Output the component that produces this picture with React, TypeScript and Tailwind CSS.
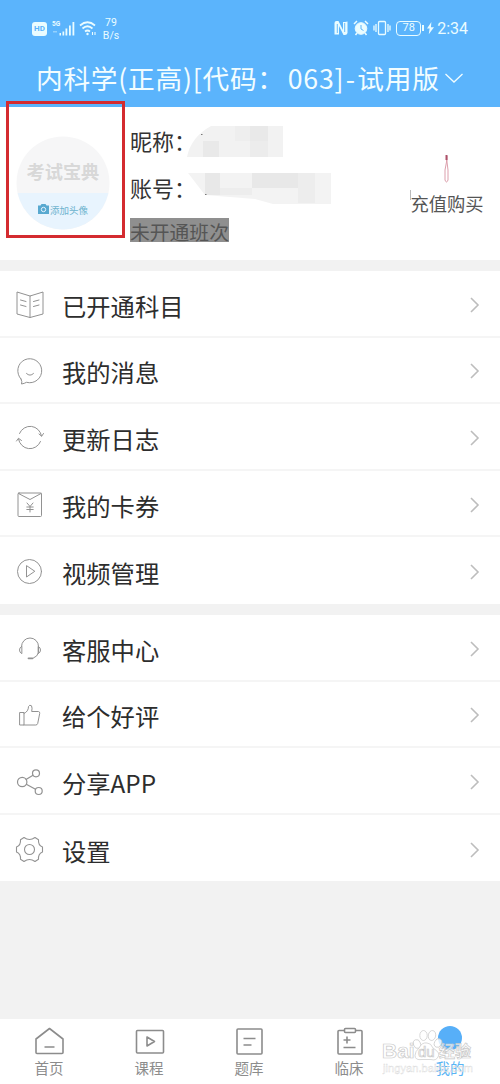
import React from 'react';

const svgProps = {
  viewBox: '0 0 30 30',
  className: 'w-[30px] h-[30px] mt-[3px] -ml-[0.5px] mr-[0.5px] shrink-0',
  fill: 'none',
  stroke: '#929292',
  strokeWidth: 1,
  strokeLinecap: 'round' as const,
  strokeLinejoin: 'round' as const,
};

const BookIcon = () => (
  <svg {...svgProps}>
    <path d="M15 6 2 2v22l13 3.5L28 24V2L15 6v21.5" />
    <path d="m5.5 10 5.5 1.5M5.5 15l5.500 1.500M18.500 11.500 24 10M18.500 16.500 24 15" />
  </svg>
);

const MessageIcon = () => (
  <svg {...svgProps}>
    <path d="M6 23A12 12 0 1 1 11.500 26.300Q9.500 27.500 6.500 28 7.500 26 6 23z" />
    <path d="M11.500 17.500q3.500 3.500 7 0" />
  </svg>
);

const RefreshIcon = () => (
  <svg {...svgProps}>
    <path d="M4.5 10.500A11.500 11.500 0 0 1 26.500 13M25.500 18.500A11.500 11.500 0 0 1 3.500 16" />
    <path d="m24 11 2.700 2.200L28.500 10.500M1.500 18l2-2.700L6.500 17.500" />
  </svg>
);

const CouponIcon = () => (
  <svg {...svgProps}>
    <rect x="3" y="3" width="23.5" height="23.5" rx="1" />
    <path d="m3.500 3.500 11.500 6 11-6M12 13l3 3.500 3-3.500M15 16.500v5.500M11.800 17h6.400M11.800 19.500h6.400" />
  </svg>
);

const VideoIcon = () => (
  <svg {...svgProps}>
    <circle cx="14.5" cy="14.500" r="12" />
    <path d="M11.500 9v11l8-5.500z" />
  </svg>
);

const ServiceIcon = () => (
  <svg {...svgProps}>
    <path d="M6.500 12.500a8.500 8.500 0 0 1 17 0v6q-1 4-5 5.500" />
    <path d="M6.500 12.500q-2 1-2 3.500t2 3.500zM23.500 12.500q2 1 2 3.500t-2 3.500z" />
    <path d="M13.500 24.300h4" strokeWidth={1.800} />
  </svg>
);

const LikeIcon = () => (
  <svg {...svgProps}>
    <path d="M5 12.500h4v12.500H5zM9 13.500q4.500-2 4.500-7 1.200-2.200 3-.7 1 2 .2 5.700h6.800q1.500.2 1.200 2l-2 10q-.4 1.500-2 1.500H9" />
  </svg>
);

const ShareIcon = () => (
  <svg {...svgProps} strokeWidth={1.200}>
    <circle cx="7.200" cy="15" r="4.700" />
    <circle cx="21" cy="6.300" r="3.500" />
    <circle cx="23.700" cy="24" r="3.500" />
    <path d="m11 12.500 7-4.300M11.300 17.200l9.200 5" />
  </svg>
);

const GearIcon = () => (
  <svg {...svgProps} strokeWidth={1.100}>
    <circle cx="14.500" cy="14.500" r="5" />
    <path d="M9 2.500Q14.500 6.500 20 2.500l3.500 2.200q-.5 5.300 4 7.300v5q-4.500 2-4 7.300L20 26.500q-5.500-4-11 0l-3.500-2.200q.5-5.300-4-7.300v-5q4.500-2 4-7.300z" />
  </svg>
);

const firstGroup = [
  { label: '已开通科目', Icon: BookIcon },
  { label: '我的消息', Icon: MessageIcon },
  { label: '更新日志', Icon: RefreshIcon },
  { label: '我的卡券', Icon: CouponIcon },
  { label: '视频管理', Icon: VideoIcon },
];

const secondGroup = [
  { label: '客服中心', Icon: ServiceIcon },
  { label: '给个好评', Icon: LikeIcon },
  { label: '分享APP', Icon: ShareIcon },
  { label: '设置', Icon: GearIcon },
];

interface MenuGroupProps {
  items: { label: string; Icon: React.FC }[];
}

const MenuGroup: React.FC<MenuGroupProps> = ({ items }) => (
  <div className="bg-white">
    {items.map(({ label, Icon }, i) => (
      <div
        key={label}
        className={`flex items-center h-[66.6px] pl-[15px] pr-[19px] ${i < items.length - 1 ? 'border-b-2 border-[#f5f5f5]' : ''}`}
      >
        <Icon />
        <span className="ml-[17px] mt-[5px] flex-1 text-[24.3px] leading-[36px] text-[#2d2d2d]">{label}</span>
        <svg viewBox="0 0 12 18" className="w-3 h-[18px] mt-[3px]" fill="none" stroke="#bdbdbd" strokeWidth="1.6">
          <path d="m2 2 7 7-7 7" />
        </svg>
      </div>
    ))}
  </div>
);

const StatusBar = () => (
  <div className="flex items-center justify-between h-14 pl-[32px] pr-[32px] text-[#eafcff]">
    <div className="flex items-center">
      <div className="flex items-center justify-center w-[15px] h-[14px] mt-[2px] rounded-[3px] bg-[#eafcff] text-[8px] font-bold text-[#5bb4fb] font-['Roboto']">HD</div>
      <svg viewBox="0 0 24 16" className="w-6 h-4 ml-[5px]" fill="currentColor">
        <text x="0" y="6" fontSize="6.5" fontWeight="700" fontFamily="Roboto, sans-serif">5G</text>
        <path d="M7.500 13H9v2.500H7.500zM10.500 11.500h1.700v4h-1.700zM13.500 8.500h1.800v7h-1.800zM17 5.500h1.800v10H17zM20.500 2h1.800v13.500h-1.800z" />
        <path d="M1 11h4v1.500H1z" opacity=".4" />
      </svg>
      <svg viewBox="0 0 18 16" className="w-[18px] h-4 ml-[3px]" fill="none" stroke="currentColor" strokeWidth="1.7">
        <path d="M1 5.500q7.500-6.500 15 0M3.500 8.500q5-4.500 10 0M6 11.500q2.500-2 5 0" />
        <circle cx="8.5" cy="14" r="1.200" fill="currentColor" stroke="none" />
        <path d="M13.500 12v3M16 12v3" strokeWidth="1.1" />
      </svg>
      <div className="ml-[5px] mt-[1px] w-[18px] text-center text-[10.5px] leading-[13px] font-['Roboto']">
        <div>79</div>
        <div>B/s</div>
      </div>
    </div>
    <div className="flex items-center">
      <svg viewBox="0 0 14 14" className="w-[14px] h-[14px]">
        <path d="M2.500 0h2L9 9V1q2 0 4.500-.5V12q-.5 2-2.500 2H9.500L5 5v8.500H.5V2Q.5 0 2.500 0z" fill="currentColor" />
        <path d="M3.300 3v9M10.700 2v9" stroke="#5bb4fb" strokeWidth=".9" />
      </svg>
      <svg viewBox="0 0 16 16" className="w-4 h-4 ml-[5px]" stroke="currentColor">
        <circle cx="8" cy="8.5" r="5.8" fill="currentColor" />
        <path d="m1 4 3-3M15 4l-3-3M4 13l-1.500 2M12 13l1.500 2" strokeWidth="1.5" />
        <path d="M8 5v4l2.500 1.500" stroke="#5bb4fb" fill="none" />
      </svg>
      <svg viewBox="0 0 18 16" className="w-[18px] h-4 ml-[4px]" fill="none" stroke="currentColor" strokeWidth="1.3">
        <rect x="5.5" y="1.500" width="7" height="13" rx="1" />
        <path d="M3 4v8M1 5.500v5M15 4v8M17 5.500v5" />
      </svg>
      <div className="flex items-center justify-center w-[25px] h-[15px] ml-[5px] rounded-[4px] border border-current text-[11px] font-['Roboto']">78</div>
      <div className="w-[2px] h-[6px] ml-px bg-current" />
      <svg viewBox="0 0 8 14" className="w-[7px] h-[14px] ml-[3px]" fill="currentColor">
        <path d="M5 0 0 7.500h3L2 14l6-8H4.500z" />
      </svg>
      <span className="ml-[3px] mt-px text-[16px] leading-[20px] font-['Roboto']">2:34</span>
    </div>
  </div>
);

const Avatar = () => (
  <svg viewBox="0 0 94 94" className="w-[94px] h-[94px] shrink-0">
    <circle cx="47" cy="47" r="46.5" fill="#f6f6f7" />
    <path d="M1.600 57h90.800a46.500 46.500 0 0 1-90.800 0z" fill="#e8f4fe" />
    <text x="10.5" y="43" fontSize="18.2" fontWeight="700" fill="#d8d8d8">考试宝典</text>
    <path d="M22 69.500h2.500l1-1.500h4l1 1.500H33v8.500H22z" fill="#58a9d0" />
    <circle cx="27.5" cy="73.500" r="2.2" fill="none" stroke="#e6f3fe" />
    <text x="34" y="77.5" fontSize="9.5" fill="#6db3ce">添加头像</text>
  </svg>
);

const Profile = () => (
  <div className="relative flex h-[153px] bg-white">
    <div className="pl-4 pt-[29px]">
      <Avatar />
    </div>
    <div className="ml-[20px] pt-[16px] flex-1 text-[22px] leading-[34px] text-[#333]">
      <div className="flex">
        <span className="w-[57px] shrink-0 whitespace-nowrap">昵称：</span>
        <svg viewBox="0 0 100 34" className="w-[100px] h-[34px]">
          <path d="M0 34Q4 14 24 3h72v31z" fill="#f2f2f2" />
          <path d="M16 18h16v16H16zM63 3h18v15H63z" fill="#e9e9e9" />
          <path d="M48 3h15v15H48z" fill="#eeeeee" />
          <path d="M63 18h18v16H63z" fill="#ececec" />
          <path d="M14 11h1.500v1H14z" fill="#777" />
        </svg>
      </div>
      <div className="flex mt-[13px]">
        <span className="w-[57px] shrink-0 whitespace-nowrap">账号：</span>
        <svg viewBox="0 0 145 34" className="w-[145px] h-[34px]">
          <path d="M1 3h143v31H86L68 29 18 25z" fill="#f3f3f3" />
          <path d="M18 3h15v22H18zM65 3h46v15H65z" fill="#e8e8e8" />
          <path d="M33 18h32v7H33zM111 3h17v30h-17z" fill="#ededed" />
          <path d="M18 24h1.500v1H18z" fill="#777" />
        </svg>
      </div>
      <span className="block mt-[14px] w-[99px] h-[24px] bg-[#8f8f8f] text-[19.8px] leading-[28px] text-[#555] whitespace-nowrap">未开通班次</span>
    </div>
    <div className="flex flex-col items-center pt-[46px] pr-4">
      <svg viewBox="0 0 74 34" className="w-[74px] h-[34px] overflow-visible" fill="none">
        <path d="M36.500 3v6l-1.500 8v10q1.500 4 3 0V17L37 9V3z" stroke="#dc9fac" />
        <path d="M36.500 2v5" stroke="#ad526a" strokeWidth="2" />
        <path d="M.5 37V47" stroke="#bbb" />
      </svg>
      <span className="mt-[2px] text-[18.3px] leading-[28px] text-[#555]">充值购买</span>
    </div>
    {/* highlight frame round the avatar */}
    <div className="absolute left-[6px] top-[-6px] w-[119px] h-[137px] border-[3px] border-[#d42b30]" />
  </div>
);

const tabs = [
  { label: '首页', art: <path d="M2 12 15.500 1.500 29 12v13.500q0 1-1 1H3q-1 0-1-1zM10.500 20h10" /> },
  { label: '课程', art: <path d="M3.500 3.500h25q1 0 1 1V25q0 1-1 1h-25q-1 0-1-1V4.500q0-1 1-1zM13 10v9l7.500-4.500z" /> },
  { label: '题库', art: <path d="M4 2h23q1 0 1 1v23q0 1-1 1H4q-1 0-1-1V3q0-1 1-1zM9.500 11.500h12M9.500 18h8" /> },
  { label: '临床', art: <path d="M10.500 3.500H5q-1 0-1 1V26q0 1 1 1h22q1 0 1-1V4.500q0-1-1-1h-5.500M11.500 1.500h9q1 0 1 1v2q0 1-1 1h-9q-1 0-1-1v-2q0-1 1-1zM9.500 13h7M13 9.500v7M9.500 20.500h12" /> },
];

const TabBar = () => (
  <div className="relative flex h-[65px] bg-white text-[14.5px] leading-[20px] text-[#8c8c8c]">
    {tabs.map(({ label, art }) => (
      <div key={label} className="w-[100px] flex flex-col items-center pt-[8px] pr-[2px]">
        <svg viewBox="0 0 31 29" className="w-[31px] h-[29px]" fill="none" stroke="#8c8c8c" strokeWidth="1.6" strokeLinejoin="round">
          {art}
        </svg>
        <span className="mt-[2px]">{label}</span>
      </div>
    ))}
    <div className="w-[100px] flex flex-col items-center pt-[7px] text-[#59b4f5]">
      <div className="w-6 h-6 rounded-full bg-[#57aff8]" />
      <span className="mt-[8px]">我的</span>
    </div>
    <svg viewBox="0 0 96 54" className="absolute left-[381px] top-[7px] w-[96px] h-[54px]" fill="#ffffff" stroke="#c9c9c9" strokeWidth=".7">
      <g fillOpacity=".8">
        <ellipse cx="36" cy="18" rx="3.5" ry="4.5" transform="rotate(-20 36 18)" />
        <ellipse cx="42.5" cy="9.5" rx="3.700" ry="5" />
        <ellipse cx="51" cy="9.5" rx="3.700" ry="5" transform="rotate(10 51 9.5)" />
        <ellipse cx="57" cy="17" rx="3.500" ry="4.500" transform="rotate(25 57 17)" />
        <path d="M38 22q3-6 8-5 4 0 6 5 8 5 5 9-2 4-7 2.500H41q-7 1-7-4 0-4 4-7.500z" />
      </g>
      <g fillOpacity=".7">
        <text x="1" y="32" fontSize="21" fontWeight="700" fontFamily="Liberation Sans, sans-serif">Bai</text>
        <text x="37" y="31" fontSize="15" fontFamily="Liberation Sans, sans-serif">du</text>
        <text x="58" y="31" fontSize="16" fontWeight="700">经验</text>
        <text x="2" y="46" fontSize="11" strokeWidth=".4" strokeOpacity=".7" textLength="90" fontFamily="Liberation Sans, sans-serif">jingyan.baidu.com</text>
      </g>
    </svg>
  </div>
);

const App = () => (
  <div className="flex flex-col w-[500px] h-[1084px] overflow-hidden bg-[#f2f2f2] font-['Noto_Sans_CJK_SC',sans-serif]">
    <header className="h-[107px] shrink-0 bg-[#5bb4fc]">
      <StatusBar />
      <div className="flex items-center pl-[36px] pt-[2px] text-[#f2fdff]">
        <h1 className="text-[26.7px] leading-[40px] tracking-[0.75px] whitespace-nowrap">
          内科学(正高)[代码：<span className="ml-[3px]">063]</span>
          <span className="mx-[1.5px]">-</span>试用版
        </h1>
        <svg viewBox="0 0 20 12" className="w-5 h-3 ml-[4px]" fill="none" stroke="currentColor" strokeWidth="1.3">
          <path d="m1.500 2 8.500 8 8.500-8" />
        </svg>
      </div>
    </header>
    <Profile />
    <div className="mt-[11px]">
      <MenuGroup items={firstGroup} />
    </div>
    <div className="mt-[11px]">
      <MenuGroup items={secondGroup} />
    </div>
    <div className="mt-auto">
      <TabBar />
    </div>
  </div>
);

export default App;
